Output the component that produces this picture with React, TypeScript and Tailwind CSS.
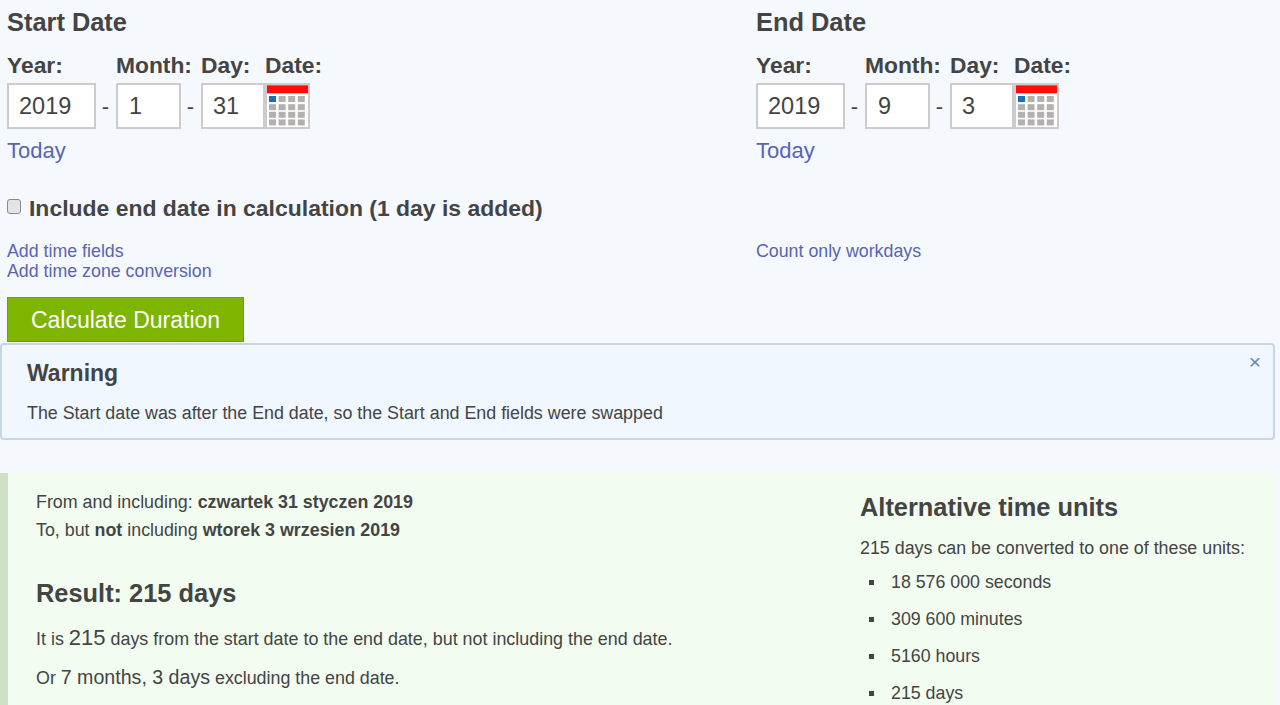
function CalendarIcon() {
  const cells = [0, 1, 2, 3, 4, 5, 6, 7, 8, 9, 10, 11, 12, 13, 14, 15];
  return (
    <div className="h-[46px] w-[45px] border-2 border-[#cccccc] bg-white">
      <svg width="41" height="42" viewBox="0 0 41 42" className="block">
        <rect x="0" y="0" width="41" height="8" fill="#ff0b0b" />
        <rect x="0" y="0" width="41" height="1" fill="#f05050" />
        <rect x="0" y="8" width="41" height="1" fill="#c4c4c4" />
        {cells.map((i) => (
          <rect
            key={i}
            x={2 + (i % 4) * 9.6}
            y={11 + Math.floor(i / 4) * 7.6 + (i >= 4 ? 0.6 : 0)}
            width="7"
            height="6"
            fill={i === 0 ? "#1a6fb5" : "#b3b0b0"}
          />
        ))}
      </svg>
    </div>
  );
}

function DateField({ title, year, month, day }: { title: string; year: string; month: string; day: string }) {
  const input = "h-[46px] border-2 border-[#cccccc] bg-white flex items-center pt-[2px] text-[23.5px] leading-none text-[#444444]";
  const label = "text-[22.8px] font-bold leading-[27px] text-[#444444]";
  return (
    <div className="w-[749px] shrink-0">
      <h2 className="h-[44px] text-[25.4px] font-bold leading-[44px] text-[#444444]">{title}</h2>
      <div className="grid grid-cols-[89px_20px_65px_20px_64px_45px] mt-[8px]">
        <div className={label}>Year:</div>
        <div />
        <div className={`${label} whitespace-nowrap`}>Month:</div>
        <div />
        <div className={label}>Day:</div>
        <div className={`${label} whitespace-nowrap`}>Date:</div>
      </div>
      <div className="grid grid-cols-[89px_20px_65px_20px_64px_45px] mt-[4px]">
        <div className={`${input} pl-[10px]`}>{year}</div>
        <div className="flex items-center justify-center pr-[1px] text-[22px] text-[#444444]">-</div>
        <div className={`${input} pl-[11px]`}>{month}</div>
        <div className="flex items-center justify-center pr-[1px] text-[22px] text-[#444444]">-</div>
        <div className={`${input} pl-[10px]`}>{day}</div>
        <CalendarIcon />
      </div>
      <a className="block mt-[9px] text-[22px] leading-[26px] text-[#5865b3]">Today</a>
    </div>
  );
}

export default function App() {
  return (
    <div className="h-[705px] w-[1280px] overflow-hidden bg-[#f5f8fc] text-[#444444] font-['Liberation_Sans',Arial,sans-serif]">
      <div className="flex pl-[7px]">
        <DateField title="Start Date" year="2019" month="1" day="31" />
        <DateField title="End Date" year="2019" month="9" day="3" />
      </div>

      <label className="mt-[30px] flex h-[28px] items-center pl-[7px]">
        <span className="mb-[4px] h-[15px] w-[14px] rounded-[3px] border border-[#8a8a8a] bg-[#e4e4e4]" />
        <span className="ml-[8px] text-[22.95px] font-bold leading-[28px] text-[#444444]">
          Include end date in calculation (1 day is added)
        </span>
      </label>

      <div className="mt-[19px] flex pl-[7px] text-[17.8px] leading-[20px] text-[#5865b3]">
        <div className="w-[749px]">
          <a className="block">Add time fields</a>
          <a className="block">Add time zone conversion</a>
        </div>
        <a className="block">Count only workdays</a>
      </div>

      <div className="pl-[7px] mt-[16px]">
        <button className="mb-[1px] block h-[45px] w-[237px] border border-[#6f9a12] bg-[#7db500] pt-[2px] text-center text-[23px] text-white">
          Calculate Duration
        </button>
      </div>

      <div className="relative h-[97px] w-[1275px] rounded-[4px] border-2 border-[#c6d6e4] bg-[#f0f7fe] pl-[25px]">
        <h3 className="mt-[15px] text-[23px] font-bold leading-[27px]">Warning</h3>
        <p className="mt-[15px] text-[17.85px] leading-[22px]">
          The Start date was after the End date, so the Start and End fields were swapped
        </p>
        <span className="absolute right-[12px] top-[7px] text-[21px] leading-[20px] text-[#6a86a8]">×</span>
      </div>

      <div className="mt-[33px] flex h-[240px] w-[1275px] border-l-[8px] border-[#cfe0c6] bg-[#f3fcf0]">
        <div className="w-[852px] shrink-0 pl-[28px] pt-[18px]">
          <p className="text-[17.85px] leading-[22px]">
            From and including: <b>czwartek 31 styczen 2019</b>
          </p>
          <p className="mt-[6px] text-[17.85px] leading-[22px]">
            To, but <b>not</b> including <b>wtorek 3 wrzesien 2019</b>
          </p>
          <h3 className="mt-[37px] text-[25.4px] font-bold leading-[30px]">Result: 215 days</h3>
          <p className="mt-[16px] text-[17.9px] leading-[28px]">
            It is <span className="text-[22px]">215</span> days from the start date to the end date, but not including the end date.
          </p>
          <p className="mt-[10px] text-[17.85px] leading-[28px]">
            Or <span className="text-[19.6px]">7 months, 3 days</span> excluding the end date.
          </p>
        </div>
        <div className="pt-[19px]">
          <h3 className="text-[25.4px] font-bold leading-[30px]">Alternative time units</h3>
          <p className="mt-[15px] text-[17.85px] leading-[22px]">215 days can be converted to one of these units:</p>
          <ul className="mt-[12px] text-[17.8px] leading-[22px]">
            {["18 576 000 seconds", "309 600 minutes", "5160 hours", "215 days"].map((t) => (
              <li key={t} className="mb-[15px] flex items-center">
                <span className="ml-[9px] h-[5px] w-[5px] bg-[#444444]" />
                <span className="ml-[17px]">{t}</span>
              </li>
            ))}
          </ul>
        </div>
      </div>
    </div>
  );
}
